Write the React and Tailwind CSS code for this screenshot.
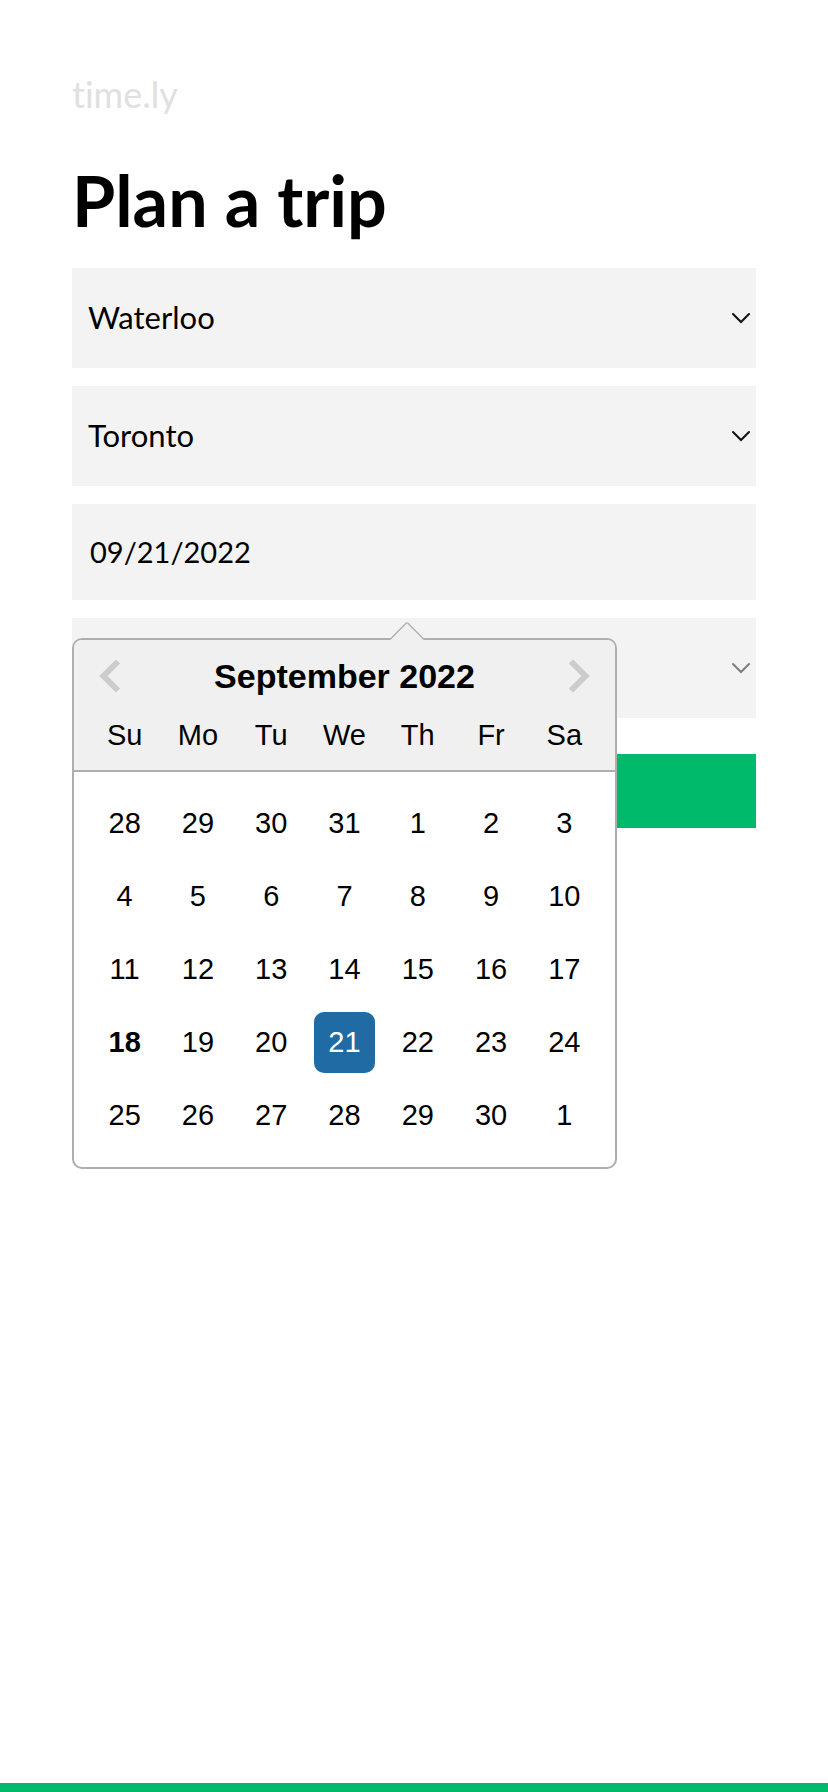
import { useState } from 'react';

const cities = ['Waterloo', 'Toronto', 'Ottawa', 'Montreal'];

const weekDays = ['Su', 'Mo', 'Tu', 'We', 'Th', 'Fr', 'Sa'];

const days = [
  '2022-08-28', '2022-08-29', '2022-08-30', '2022-08-31', '2022-09-01', '2022-09-02', '2022-09-03',
  '2022-09-04', '2022-09-05', '2022-09-06', '2022-09-07', '2022-09-08', '2022-09-09', '2022-09-10',
  '2022-09-11', '2022-09-12', '2022-09-13', '2022-09-14', '2022-09-15', '2022-09-16', '2022-09-17',
  '2022-09-18', '2022-09-19', '2022-09-20', '2022-09-21', '2022-09-22', '2022-09-23', '2022-09-24',
  '2022-09-25', '2022-09-26', '2022-09-27', '2022-09-28', '2022-09-29', '2022-09-30', '2022-10-01',
];

const today = '2022-09-18';

const formatDate = (iso) => {
  const [year, month, day] = iso.split('-');
  return `${month}/${day}/${year}`;
};

const SelectField = ({ id, label, options, value, onChange, disabled }) => (
  <div className="relative">
    <select
      id={id}
      aria-label={label}
      value={value}
      disabled={disabled}
      onChange={(e) => onChange(e.target.value)}
      className="block h-[100px] w-full appearance-none rounded-none bg-[#f3f3f3] px-4 pb-0.5 text-[31px] text-black outline-none"
    >
      {options.map((option) => (
        <option key={option} value={option}>
          {option}
        </option>
      ))}
    </select>
    <svg
      className={`pointer-events-none absolute top-[44px] right-1.5 h-3 w-[18px] ${disabled ? 'text-[#7d7d7d]' : 'text-[#111111]'}`}
      viewBox="0 0 18 12"
      fill="none"
      stroke="currentColor"
      strokeWidth="2"
      strokeLinecap="round"
    >
      <path d="M1 2L9 10L17 2" />
    </svg>
  </div>
);

const Calendar = ({ selected, onSelect }) => (
  <div className="absolute top-full left-0 z-10 mt-[38px] w-[545px] rounded-[10px] border-2 border-[#aeaeae] bg-white font-['Liberation_Sans',Arial,sans-serif] text-[29px] text-black">
    {/* Pointer towards the date field */}
    <svg
      className="absolute -top-[18px] left-[315px] h-[19px] w-9"
      viewBox="0 0 36 19"
      fill="#f0f0f0"
    >
      <path d="M1 19V17.500L17 1.200Q18 0.400 19 1.200L35 17.500V19Z" />
      <path
        d="M1 17.500L17 1.200Q18 0.400 19 1.200L35 17.500"
        fill="none"
        stroke="#aeaeae"
        strokeWidth="1.300"
      />
    </svg>
    <div className="rounded-t-lg border-b-2 border-[#aeaeae] bg-[#f0f0f0] px-[14px] py-[14px]">
      <div className="flex h-11 items-center justify-between px-[11px]">
        <button type="button" aria-label="Previous Month">
          <svg className="h-[34px] w-[22px]" viewBox="0 0 22 34" fill="none" stroke="#cccccc" strokeWidth="6">
            <path d="M19 2.500L4.500 17L19 31.500" />
          </svg>
        </button>
        <h2 className="text-[34px] leading-[44px] font-bold">September 2022</h2>
        <button type="button" aria-label="Next Month">
          <svg className="h-[34px] w-[22px]" viewBox="0 0 22 34" fill="none" stroke="#cccccc" strokeWidth="6">
            <path d="M3 2.500L17.500 17L3 31.500" />
          </svg>
        </button>
      </div>
      <div className="grid h-[58px] grid-cols-7 items-center pt-4 text-center">
        {weekDays.map((day) => (
          <span key={day}>{day}</span>
        ))}
      </div>
    </div>
    <div className="grid grid-cols-7 px-[14px] pt-[15px] pb-[15px]">
      {days.map((day) => (
        <button
          key={day}
          type="button"
          onClick={() => onSelect(day)}
          className={`m-1.5 h-[61px] rounded-[10px] ${day === selected ? 'bg-[#216ba5] text-white' : ''} ${day === today ? 'font-bold' : ''}`}
        >
          {Number(day.slice(-2))}
        </button>
      ))}
    </div>
  </div>
);

const App = () => {
  const [from, setFrom] = useState('Waterloo');
  const [to, setTo] = useState('Toronto');
  const [date, setDate] = useState('2022-09-21');

  return (
    <div className="flex min-h-screen flex-col bg-white font-[Lato,sans-serif] text-black [font-variant-ligatures:none]">
      <main className="flex-1 px-[72px] pt-[70px]">
        <p className="text-[36px] leading-[48px] text-[#e0e0e0]">time.ly</p>
        <h1 className="mt-10 text-[70px] leading-[84px] font-bold">Plan a trip</h1>
        <form className="mt-[26px] flex flex-col gap-[18px]" onSubmit={(e) => e.preventDefault()}>
          <SelectField id="from" label="From" options={cities} value={from} onChange={setFrom} />
          <SelectField id="to" label="To" options={cities} value={to} onChange={setTo} />
          <div className="relative">
            <input
              id="date"
              type="text"
              aria-label="Date"
              readOnly
              value={formatDate(date)}
              className="block h-24 w-full bg-[#f3f3f3] px-[18px] pb-0.5 text-[29px] outline-none"
            />
            <Calendar selected={date} onSelect={setDate} />
          </div>
          <SelectField id="time" label="Time" options={['']} value="" onChange={() => {}} disabled />
          <button type="submit" aria-label="Search" className="mt-[18px] h-[74px] w-full bg-[#00ba6c]" />
        </form>
      </main>
      <footer className="h-[9px] bg-[#00ba6c]" />
    </div>
  );
};

export default App;
